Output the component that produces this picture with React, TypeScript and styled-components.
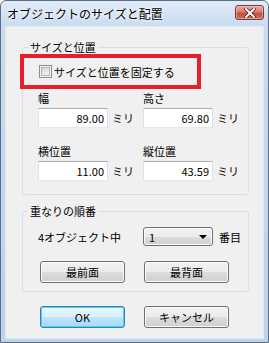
import styled, { createGlobalStyle } from 'styled-components'

const GlobalStyle = createGlobalStyle`
  html, body { margin: 0; padding: 0; background: #ffffff; }
  body { font-family: "Noto Sans CJK JP", "Noto Sans", sans-serif; color: #000; }
`

const Window = styled.div`
  width: 269px;
  height: 343px;
  box-sizing: border-box;
  border: 1px solid #5d6f87;
  border-radius: 6px 6px 0 0;
  background: linear-gradient(180deg, #dfebf8 0px, #c8dbf0 26px, #bdd2eb 100%);
  display: flex;
  flex-direction: column;
  padding: 0 4px 3px 4px;
`

const TitleBar = styled.div`
  height: 25px;
  display: flex;
  align-items: flex-start;
  justify-content: space-between;
`

const Title = styled.div`
  font-size: 12px;
  line-height: 14px;
  margin: 6px 0 0 2px;
  text-shadow: 0 0 6px #ffffff, 0 0 3px #ffffff;
`

const CloseBtn = styled.div`
  width: 29px;
  height: 15px;
  margin-top: 4px;
  box-sizing: border-box;
  border: 1px solid #7a3a35;
  border-radius: 3px;
  background: linear-gradient(180deg, #e9a99d 0%, #d7806f 45%, #c2503f 55%, #cf6e58 100%);
  box-shadow: inset 0 0 0 1px rgba(255, 220, 210, 0.45);
  display: flex;
  align-items: center;
  justify-content: center;
`

const Client = styled.div`
  flex: 1;
  background: #f0f0f0;
  border: 1px solid #dfe8f3;
  padding: 13px 14px 0 16px;
  display: flex;
  flex-direction: column;
`

const Group = styled.fieldset<{ $gap?: number }>`
  margin: ${p => p.$gap ?? 0}px 0 0 0;
  padding: 0 0 ${p => (p.$gap ? 8 : 13)}px 0;
  min-width: 0;
  border: 1px solid #d5dfe5;
  border-radius: 3px;
`

const Legend = styled.legend`
  font-size: 11px;
  line-height: 14px;
  padding: 0 2px;
  margin-left: 5px;
`

const Highlight = styled.div`
  margin-left: -3px;
  width: 181px;
  height: 35px;
  box-sizing: border-box;
  border: 4px solid #e5202a;
  display: flex;
  align-items: center;
  padding-left: 15px;
  gap: 2px;
  font-size: 11px;
`

const CheckBox = styled.span`
  width: 13px;
  height: 13px;
  box-sizing: border-box;
  border: 1px solid #8e8f8f;
  background: #f4f4f4;
  box-shadow: inset 0 0 0 1px #f4f4f4, inset 0 0 0 2px #b5b5b5;
  background-image: linear-gradient(135deg, #cbcbcb 0%, #f0f0f0 70%, #fbfbfb 100%);
`

const Fields = styled.div`
  display: grid;
  grid-template-columns: 105px 105px;
  row-gap: 16px;
  padding-left: 15px;
  margin-top: 2px;
`

const Field = styled.div`
  display: flex;
  flex-direction: column;
  gap: 3px;
`

const Label = styled.div`
  font-size: 11px;
  line-height: 14px;
`

const InputRow = styled.div`
  display: flex;
  align-items: center;
  gap: 4px;
`

const TextBox = styled.input`
  width: 70px;
  height: 20px;
  box-sizing: border-box;
  border: 1px solid;
  border-color: #abadb3 #dbdfe6 #e3e9ef #e2e3ea;
  background: #ffffff;
  text-align: right;
  padding: 0 3px 0 0;
  font-family: "Noto Sans CJK JP", sans-serif;
  font-size: 11px;
  color: #000;
  outline: none;
`

const Unit = styled.span`
  font-size: 11px;
`

const OrderRow = styled.div`
  display: flex;
  align-items: center;
  padding: 9px 0 0 15px;
  font-size: 11px;
`

const OrderLabel = styled.div`
  width: 105px;
`

const Combo = styled.div`
  width: 70px;
  height: 19px;
  box-sizing: border-box;
  border: 1px solid #707070;
  border-radius: 3px;
  background: linear-gradient(180deg, #f2f2f2 0%, #ebebeb 50%, #dddddd 50%, #cfcfcf 100%);
  box-shadow: inset 0 0 0 1px #fbfbfb;
  display: flex;
  align-items: center;
  justify-content: space-between;
  padding: 0 5px 0 5px;
`

const Arrow = styled.span`
  width: 0;
  height: 0;
  border-left: 4px solid transparent;
  border-right: 4px solid transparent;
  border-top: 4px solid #000;
`

const Suffix = styled.span`
  margin-left: 6px;
`

const ButtonRow = styled.div<{ $left: number; $top: number }>`
  display: flex;
  gap: 19px;
  padding-left: ${p => p.$left}px;
  margin-top: ${p => p.$top}px;
`

const Button = styled.button<{ $default?: boolean }>`
  width: 85px;
  height: 22px;
  box-sizing: border-box;
  border: 1px solid ${p => (p.$default ? '#3c7fb1' : '#707070')};
  border-radius: 3px;
  background: ${p =>
    p.$default
      ? 'linear-gradient(180deg, #eaf6fd 0%, #d9f0fc 50%, #bee6fd 50%, #a7d9f5 100%)'
      : 'linear-gradient(180deg, #f2f2f2 0%, #ebebeb 50%, #dddddd 50%, #cfcfcf 100%)'};
  box-shadow: inset 0 0 0 1px ${p => (p.$default ? '#48d3f7' : '#fbfbfb')};
  font-family: "Noto Sans CJK JP", sans-serif;
  font-size: 11px;
  color: #000;
  padding: 0;
`

const size = [
  { label: '幅', value: '89.00' },
  { label: '高さ', value: '69.80' },
  { label: '横位置', value: '11.00' },
  { label: '縦位置', value: '43.59' },
]

export default function App() {
  return (
    <>
      <GlobalStyle />
      <Window>
        <TitleBar>
          <Title>オブジェクトのサイズと配置</Title>
          <CloseBtn>
            <svg width="12" height="10" viewBox="0 0 12 10">
              <path d="M2 1 L10 9 M10 1 L2 9" stroke="#5a1f1a" strokeWidth="3.6" strokeLinecap="square" />
              <path d="M2 1 L10 9 M10 1 L2 9" stroke="#ffffff" strokeWidth="2" strokeLinecap="square" />
            </svg>
          </CloseBtn>
        </TitleBar>
        <Client>
          <Group>
            <Legend>サイズと位置</Legend>
            <Highlight>
              <CheckBox />
              <span>サイズと位置を固定する</span>
            </Highlight>
            <Fields>
              {size.map(f => (
                <Field key={f.label}>
                  <Label>{f.label}</Label>
                  <InputRow>
                    <TextBox readOnly value={f.value} />
                    <Unit>ミリ</Unit>
                  </InputRow>
                </Field>
              ))}
            </Fields>
          </Group>
          <Group $gap={9}>
            <Legend>重なりの順番</Legend>
            <OrderRow>
              <OrderLabel>4オブジェクト中</OrderLabel>
              <Combo>
                <span>1</span>
                <Arrow />
              </Combo>
              <Suffix>番目</Suffix>
            </OrderRow>
            <ButtonRow $left={17} $top={15}>
              <Button>最前面</Button>
              <Button>最背面</Button>
            </ButtonRow>
          </Group>
          <ButtonRow $left={18} $top={14}>
            <Button $default>OK</Button>
            <Button>キャンセル</Button>
          </ButtonRow>
        </Client>
      </Window>
    </>
  )
}
